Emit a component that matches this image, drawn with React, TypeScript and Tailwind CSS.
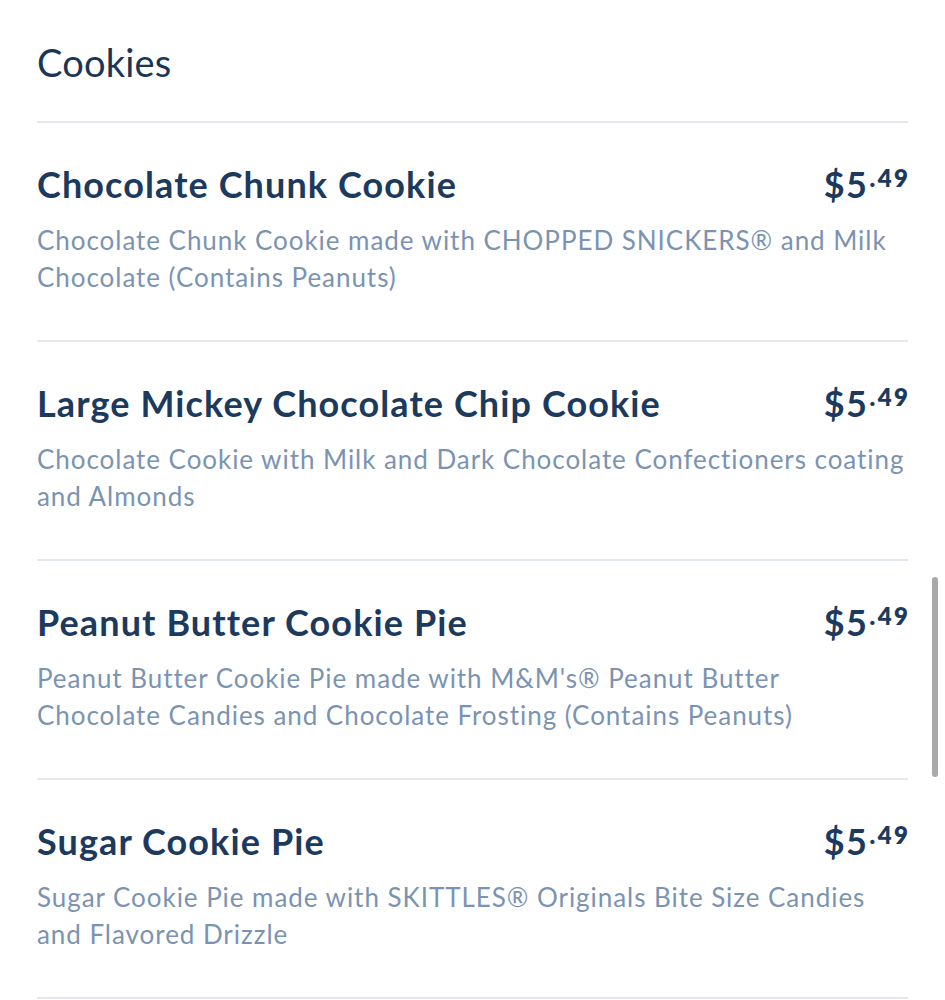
import React from "react";

const items = [
  {
    title: "Chocolate Chunk Cookie",
    desc: "Chocolate Chunk Cookie made with CHOPPED SNICKERS® and Milk Chocolate (Contains Peanuts)",
  },
  {
    title: "Large Mickey Chocolate Chip Cookie",
    desc: "Chocolate Cookie with Milk and Dark Chocolate Confectioners coating and Almonds",
  },
  {
    title: "Peanut Butter Cookie Pie",
    desc: "Peanut Butter Cookie Pie made with M&M's® Peanut Butter Chocolate Candies and Chocolate Frosting (Contains Peanuts)",
  },
  {
    title: "Sugar Cookie Pie",
    desc: "Sugar Cookie Pie made with SKITTLES® Originals Bite Size Candies and Flavored Drizzle",
  },
];

export default function App() {
  return (
    <div
      className="relative w-[945px] h-[1000px] overflow-hidden bg-white"
      style={{ fontFamily: "Lato, 'Open Sans', sans-serif" }}
    >
      <div className="px-[37px] pt-[40px]">
        <h1 className="text-[38px] leading-[44px] text-[#1b3556] font-normal tracking-[0.2px] mb-[37px]">Cookies</h1>
        <div className="h-[2px] bg-[#e3e8ef]" />
        {items.map((it) => (
          <div key={it.title}>
            <div className="pt-[41px] pb-[44px]">
              <div className="flex items-start justify-between">
                <div className="text-[36px] leading-[40px] font-bold tracking-[1.1px] text-[#1c3a5e]">{it.title}</div>
                <div className="flex items-start text-[#1c3a5e] font-bold">
                  <span className="text-[36px] leading-[40px] tracking-[1.5px]">$5</span>
                  <span className="text-[24px] leading-[26px] mt-[1px] ml-[1px] tracking-[2.5px] mr-[-2.5px] font-extrabold">.49</span>
                </div>
              </div>
              <p className="mt-[18px] text-[26px] leading-[37px] tracking-[0.95px] text-[#7b93b2]">{it.desc}</p>
            </div>
            <div className="h-[2px] bg-[#e3e8ef]" />
          </div>
        ))}
      </div>
      <div className="absolute left-[932px] top-[577px] w-[6px] h-[200px] rounded-full bg-[#a9a9a9]" />
    </div>
  );
}
